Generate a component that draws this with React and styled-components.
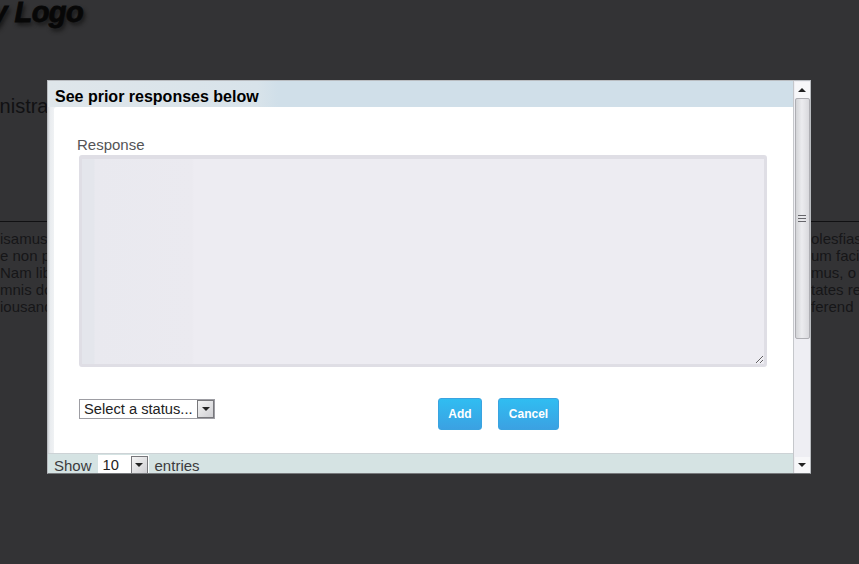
import React from "react";
import styled, { createGlobalStyle } from "styled-components";

const Global = createGlobalStyle`
  html, body { margin: 0; padding: 0; height: 564px; overflow: hidden; background: #333335; }
  body { font-family: "Liberation Sans", Arial, sans-serif; }
`;

const Page = styled.div`
  position: relative;
  width: 859px;
  height: 564px;
  overflow: hidden;
  background: #333335;
  color: #111113;
`;

const Logo = styled.div`
  height: 44px;
  margin-left: -32px;
  margin-top: -3px;
  font-size: 29px;
  line-height: 30px;
  font-weight: 700;
  font-style: italic;
  letter-spacing: -0.6px;
  color: #070707;
  -webkit-text-stroke: 0.8px #070707;
  text-shadow: 2px 3px 4px #141414;
  white-space: nowrap;
`;

const Heading = styled.div`
  margin: 54px 0 0 -46px;
  height: 126px;
  font-size: 20px;
  line-height: 22px;
  color: #111113;
  white-space: nowrap;
`;

const Rule = styled.div`
  height: 1px;
  background: #101012;
`;

const Lines = styled.div`
  margin-top: 8px;
`;

const Line = styled.div`
  display: flex;
  justify-content: space-between;
  height: 17px;
  font-size: 15px;
  line-height: 17px;
  white-space: nowrap;
  color: #161618;
`;

const RightCut = styled.span`
  width: 48px;
  overflow: hidden;
`;

const Modal = styled.div`
  position: absolute;
  left: 47px;
  top: 80px;
  width: 764px;
  height: 394px;
  box-sizing: border-box;
  display: flex;
  border: 1px solid #b9bcc0;
  border-bottom-color: #77797c;
  background: #fff;
  overflow: hidden;
`;

const Content = styled.div`
  flex: 1;
  min-width: 0;
  display: flex;
  flex-direction: column;
  background: linear-gradient(90deg, #cfd3d6 0, #e9ecef 2px, #f0f2f4 6px);
`;

const TitleBar = styled.div`
  height: 26px;
  box-sizing: border-box;
  padding-left: 7px;
  font-size: 16px;
  line-height: 32px;
  font-weight: 700;
  color: #000;
  background: linear-gradient(90deg, #dfe6ea 0, #d8e3ea 210px, #d0dfe9 230px, #d0dfe9 100%);
`;

const Body = styled.div`
  flex: 1;
  margin-left: 6px;
  padding: 29px 26px 0 23px;
  background: #fff;
  border-top-left-radius: 3px;
`;

const FieldLabel = styled.div`
  font-size: 15px;
  line-height: 18px;
  color: #545456;
  height: 19px;
`;

const ResponseBox = styled.textarea`
  display: block;
  box-sizing: border-box;
  width: 688px;
  height: 212px;
  margin: 0 0 0 2px;
  padding: 0;
  border: 3px solid #dfdee5;
  border-top-width: 4px;
  border-radius: 3px;
  outline: none;
  resize: both;
  background:
    linear-gradient(90deg, #e4e6ec 0, #e4e6ec 12px, #e9e9ef 13px, #ebeaf0 110px, #edecf2 112px);
`;

const ControlRow = styled.div`
  display: flex;
  align-items: flex-start;
  margin: 32px 0 0 2px;
`;

const FakeSelect = styled.div`
  display: flex;
  box-sizing: border-box;
  width: ${(p) => p.$width}px;
  height: ${(p) => p.$height}px;
  border: 1px solid ${(p) => p.$border};
  background: #fff;
  font-size: 14.7px;
  line-height: ${(p) => p.$lineHeight}px;
  color: #222;
`;

const SelectValue = styled.span`
  flex: 1;
  min-width: 0;
  padding-left: 4px;
  white-space: nowrap;
`;

const SelectArrow = styled.span`
  width: 17px;
  flex: none;
  display: flex;
  align-items: center;
  justify-content: center;
  box-sizing: border-box;
  border: 1px solid #77777b;
  background: linear-gradient(135deg, #f4f4f4, #cfcfd3);
`;

const Buttons = styled.div`
  display: flex;
  gap: 16px;
  margin: -1px 0 0 223px;
`;

const ActionButton = styled.button`
  width: ${(p) => p.$width}px;
  height: 32px;
  padding: 0;
  border: 1px solid #3aa3e0;
  border-radius: 3px;
  background: linear-gradient(180deg, #30bdf1, #3ba1e2);
  color: #fff;
  font: 700 12px "Liberation Sans", Arial, sans-serif;
`;

const Footer = styled.div`
  height: 20px;
  flex: none;
  box-sizing: border-box;
  border-top: 1px solid #cdd3d6;
  display: flex;
  align-items: flex-start;
  padding-left: 6px;
  background: #d5e3e3;
  font-size: 15px;
  line-height: 24px;
  color: #3c3c3e;
`;

const FooterSelect = styled.div`
  margin: 1px 6px 0 6px;
`;

const Scrollbar = styled.div`
  width: 17px;
  flex: none;
  display: flex;
  flex-direction: column;
  align-items: center;
  box-sizing: border-box;
  padding-top: 1px;
  border-left: 1px solid #c5c7cb;
  background: #eeeef3;
`;

const ArrowCap = styled.div`
  width: 15px;
  height: 16px;
  flex: none;
  display: flex;
  align-items: center;
  justify-content: center;
  background: #f7f7f9;
`;

const Thumb = styled.div`
  width: 15px;
  height: 241px;
  flex: none;
  box-sizing: border-box;
  border: 1px solid #aeaeb3;
  border-radius: 2px;
  display: flex;
  align-items: center;
  justify-content: center;
  background: linear-gradient(90deg, #d3d4d7, #ececef 45%, #d9d9dd);
`;

const Track = styled.div`
  flex: 1;
`;

const Caret = ({ up, color = "#222" }) => (
  <svg width="8" height="4" viewBox="0 0 8 4">
    <path d={up ? "M0 4 L4 0 L8 4 Z" : "M0 0 L8 0 L4 4 Z"} fill={color} />
  </svg>
);

const Grip = () => (
  <svg width="8" height="8" viewBox="0 0 8 8">
    <path d="M0 .5H8M0 3.5H8M0 6.5H8" stroke="#66666b" strokeWidth="1" />
  </svg>
);

export default function App() {
  const rows = [
    ["isamus", "olesfias"],
    ["e non p", "um faci"],
    [" Nam lib", "mus, o"],
    ["mnis do", "tates re"],
    ["iousand", "ferend"],
  ];
  return (
    <Page>
      <Global />
      <Logo>My Logo</Logo>
      <Heading>Administration</Heading>
      <Rule />
      <Lines>
        {rows.map(([l, r]) => (
          <Line key={l}>
            <span>{l}</span>
            <RightCut>{r}</RightCut>
          </Line>
        ))}
      </Lines>
      <Modal>
        <Content>
          <TitleBar>See prior responses below</TitleBar>
          <Body>
            <FieldLabel>Response</FieldLabel>
            <ResponseBox />
            <ControlRow>
              <FakeSelect $width={136} $height={20} $lineHeight={19} $border="#9d9da3">
                <SelectValue>Select a status...</SelectValue>
                <SelectArrow><Caret /></SelectArrow>
              </FakeSelect>
              <Buttons>
                <ActionButton $width={44}>Add</ActionButton>
                <ActionButton $width={61}>Cancel</ActionButton>
              </Buttons>
            </ControlRow>
          </Body>
          <Footer>
            Show
            <FooterSelect>
              <FakeSelect $width={51} $height={20} $lineHeight={19} $border="#fff">
                <SelectValue>10</SelectValue>
                <SelectArrow><Caret /></SelectArrow>
              </FakeSelect>
            </FooterSelect>
            entries
          </Footer>
        </Content>
        <Scrollbar>
          <ArrowCap><Caret up /></ArrowCap>
          <Thumb><Grip /></Thumb>
          <Track />
          <ArrowCap><Caret /></ArrowCap>
        </Scrollbar>
      </Modal>
    </Page>
  );
}
